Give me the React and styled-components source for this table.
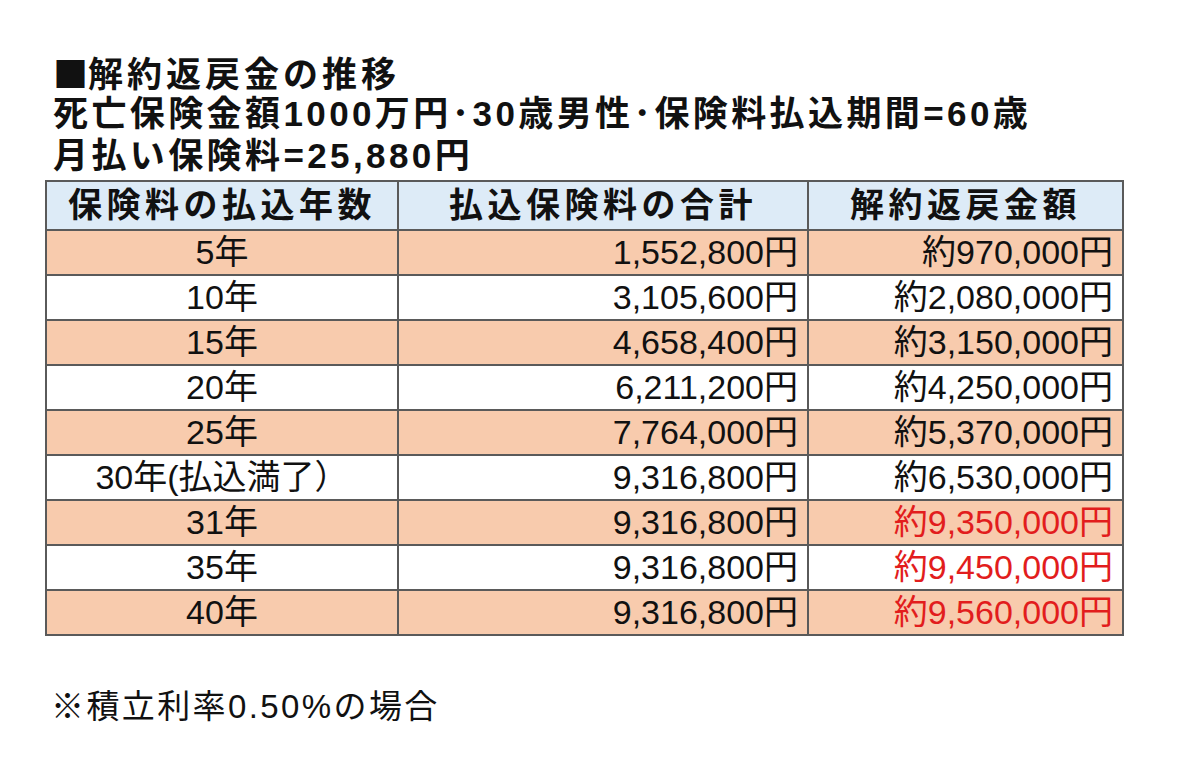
import React from "react";
import styled, { createGlobalStyle } from "styled-components";

const Global = createGlobalStyle`
  html, body { margin: 0; padding: 0; background: #fff; }
  body { font-family: "Liberation Sans", "Noto Sans CJK JP", sans-serif; color: #111; }
`;

const Page = styled.div`
  width: 1200px;
  height: 768px;
  box-sizing: border-box;
  padding: 51px 0 0 45px;
`;

const TitleBlock = styled.div`
  padding-left: 8px;
  margin-bottom: 3px;
`;

const TitleLine = styled.div`
  font-size: 35px;
  font-weight: 700;
  line-height: 42px;
  height: 42px;
  letter-spacing: ${(p) => p.$ls || "3.4px"};
  white-space: nowrap;
`;

const Square = styled.span`
  font-family: "Noto Sans CJK JP", sans-serif;
  letter-spacing: 0;
`;

const Table = styled.table`
  border-collapse: collapse;
  table-layout: fixed;
  width: 1077px;
`;

const HeadCell = styled.th`
  background: #ddebf7;
  border: 2px solid #5a5a5a;
  height: 47px;
  padding: 0;
  font-size: 34px;
  font-weight: 700;
  letter-spacing: 4.5px;
  text-align: center;
  line-height: 47px;
  white-space: nowrap;
`;

const Row = styled.tr`
  background: ${(p) => (p.$shaded ? "#f8cbad" : "#ffffff")};
`;

const Cell = styled.td`
  border: 2px solid #5a5a5a;
  height: 43px;
  padding: 0 ${(p) => (p.$align === "right" ? "9px" : "0")} 0 0;
  font-size: 34px;
  line-height: 43px;
  text-align: ${(p) => p.$align};
  color: ${(p) => (p.$red ? "#e21d1d" : "#111")};
  white-space: nowrap;
`;

const Note = styled.div`
  margin-top: 50px;
  padding-left: 6px;
  font-size: 33px;
  line-height: 42px;
  letter-spacing: 2.4px;
`;

const rows = [
  ["5年", "1,552,800円", "約970,000円", false],
  ["10年", "3,105,600円", "約2,080,000円", false],
  ["15年", "4,658,400円", "約3,150,000円", false],
  ["20年", "6,211,200円", "約4,250,000円", false],
  ["25年", "7,764,000円", "約5,370,000円", false],
  ["30年(払込満了）", "9,316,800円", "約6,530,000円", false],
  ["31年", "9,316,800円", "約9,350,000円", true],
  ["35年", "9,316,800円", "約9,450,000円", true],
  ["40年", "9,316,800円", "約9,560,000円", true],
];

export default function App() {
  return (
    <Page>
      <Global />
      <TitleBlock>
        <TitleLine $ls="4px"><Square>■</Square>解約返戻金の推移</TitleLine>
        <TitleLine>死亡保険金額1000万円･30歳男性･保険料払込期間=60歳</TitleLine>
        <TitleLine>月払い保険料=25,880円</TitleLine>
      </TitleBlock>
      <Table>
        <colgroup>
          <col style={{ width: 352 }} />
          <col style={{ width: 410 }} />
          <col style={{ width: 315 }} />
        </colgroup>
        <thead>
          <tr>
            <HeadCell>保険料の払込年数</HeadCell>
            <HeadCell>払込保険料の合計</HeadCell>
            <HeadCell>解約返戻金額</HeadCell>
          </tr>
        </thead>
        <tbody>
          {rows.map(([y, paid, back, red], i) => (
            <Row key={y} $shaded={i % 2 === 0}>
              <Cell $align="center">{y}</Cell>
              <Cell $align="right">{paid}</Cell>
              <Cell $align="right" $red={red}>{back}</Cell>
            </Row>
          ))}
        </tbody>
      </Table>
      <Note>※積立利率0.50%の場合</Note>
    </Page>
  );
}
